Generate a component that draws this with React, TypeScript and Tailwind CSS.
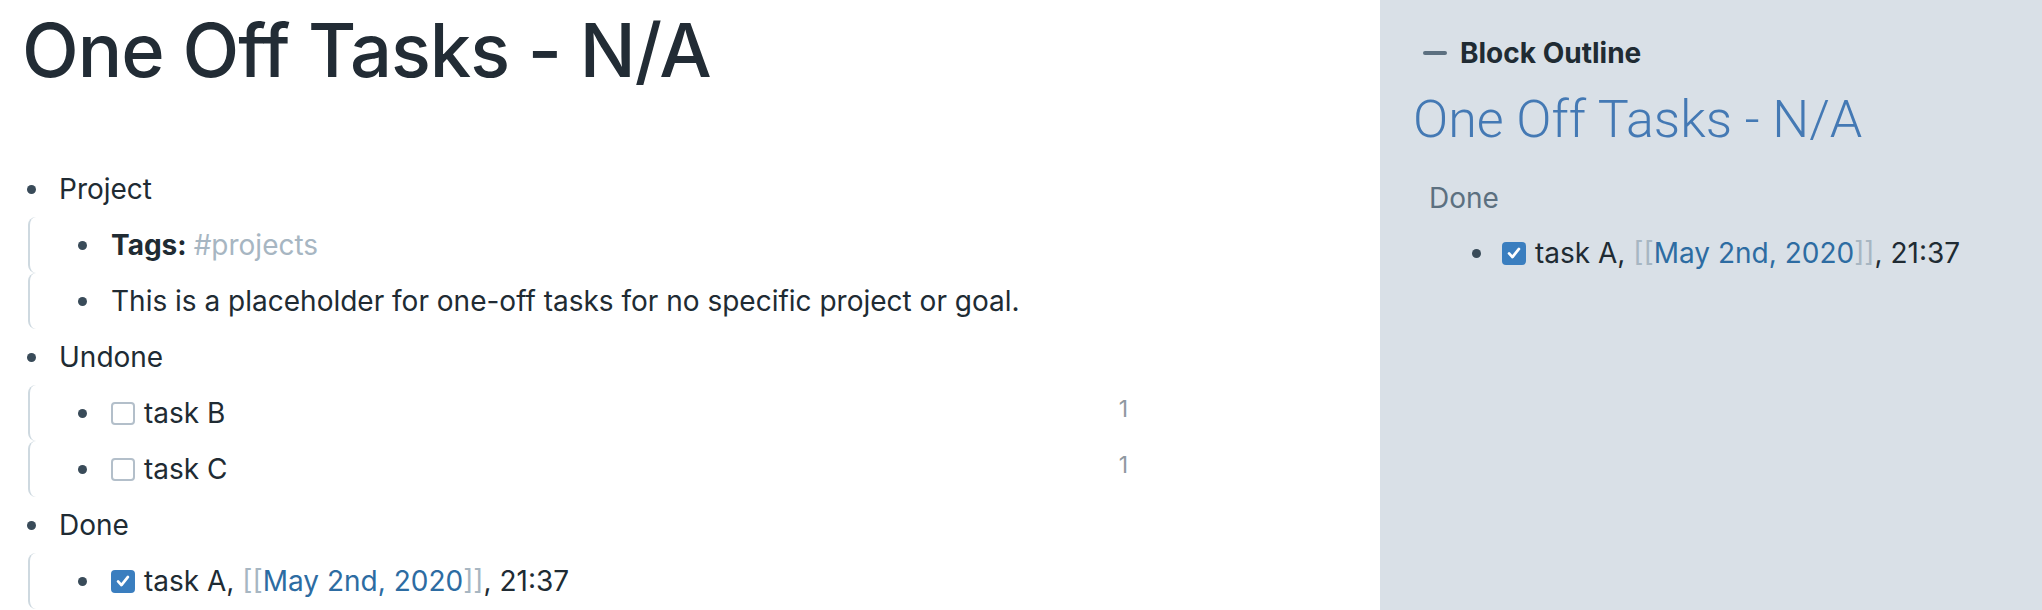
import type { ReactNode } from 'react';

const FONT = { fontFamily: 'Inter, "Noto Sans", sans-serif' };

function Bullet() {
  return (
    <span className="flex w-[22px] shrink-0 justify-center">
      <span className="h-[9px] w-[9px] rounded-full bg-[#394b59]" />
    </span>
  );
}

function Checkbox({ checked }: { checked?: boolean }) {
  if (checked) {
    return (
      <span className="mr-[9px] flex h-[23px] w-[24px] shrink-0 items-center justify-center rounded-[4px] bg-[#3a7ebf]">
        <svg viewBox="0 0 16 16" className="h-[18px] w-[18px]" fill="none">
          <path d="M3.6 8.4 L6.6 11.6 L12.4 4.4" stroke="white" strokeWidth="2.4" strokeLinecap="round" strokeLinejoin="round" />
        </svg>
      </span>
    );
  }
  return <span className="mr-[9px] h-[23px] w-[24px] shrink-0 rounded-[4px] border-2 border-[#b3bfca] bg-white" />;
}

function DateLink() {
  return (
    <>
      <span className="text-[#a7b6c2]">[[</span>
      <span className="text-[#2d6ca2]">May 2nd, 2020</span>
      <span className="text-[#a7b6c2]">]]</span>
    </>
  );
}

function Row({ children, count }: { children: ReactNode; count?: number }) {
  return (
    <div className="flex h-[56px] items-center">
      <Bullet />
      <div className="ml-[18px] flex flex-1 items-center">{children}</div>
      {count !== undefined && (
        <span className="-mt-[9px] mr-[12px] text-[23px] leading-[28px] text-[#8f98a0]">{count}</span>
      )}
    </div>
  );
}

function Child({ children, count }: { children: ReactNode; count?: number }) {
  return (
    <div className="rounded-l-[8px] border-l-2 border-[#ced9e0] pl-[41px]">
      <Row count={count}>{children}</Row>
    </div>
  );
}

function Group({ title, children }: { title: string; children: ReactNode }) {
  return (
    <div>
      <div className="flex h-[56px] items-center">
        <Bullet />
        <span className="ml-[17px]">{title}</span>
      </div>
      <div className="ml-[8px]">{children}</div>
    </div>
  );
}

export default function App() {
  return (
    <div className="flex h-[610px] w-[2042px] overflow-hidden bg-white text-[#202b33]" style={FONT}>
      <main className="w-[1380px] shrink-0 pl-[20px]">
        <h1 className="mt-[5px] pl-[2px] text-[74px] font-medium leading-[90px] tracking-[-1px] text-[#222c35]">
          One Off Tasks - N/A
        </h1>

        <div className="mt-[66px] w-[1120px] text-[28px] leading-[34px]">
          <Group title="Project">
            <Child>
              <span className="font-bold">Tags:</span>
              <span className="ml-[7px] text-[#a7b6c2]">#projects</span>
            </Child>
            <Child>This is a placeholder for one-off tasks for no specific project or goal.</Child>
          </Group>
          <Group title="Undone">
            <Child count={1}>
              <Checkbox />
              task B
            </Child>
            <Child count={1}>
              <Checkbox />
              task C
            </Child>
          </Group>
          <Group title="Done">
            <Child>
              <Checkbox checked />
              <span>
                task A, <DateLink />, 21:37
              </span>
            </Child>
          </Group>
        </div>
      </main>

      <aside className="flex-1 bg-[#d9e0e7] pl-[33px]">
        <div className="mt-[36px] flex items-center pl-[10px]">
          <span className="h-[4px] w-[24px] rounded-full bg-[#5c7080]" />
          <span className="ml-[13px] text-[28px] font-bold leading-[34px] text-[#202b33]">Block Outline</span>
        </div>
        <h2
          className="mt-[19px] text-[52px] font-light leading-[62px] text-[#4479b4]"
          style={{ fontFamily: 'Roboto, sans-serif' }}
        >
          One Off Tasks - N/A
        </h2>
        <div className="mt-[30px] pl-[16px] text-[28px] leading-[34px]">
          <div className="text-[#5c7080]">Done</div>
          <div className="mt-[21px] flex items-center pl-[36px]">
            <Bullet />
            <span className="ml-[15px] flex items-center">
              <Checkbox checked />
              <span>
                task A, <DateLink />, 21:37
              </span>
            </span>
          </div>
        </div>
      </aside>
    </div>
  );
}
